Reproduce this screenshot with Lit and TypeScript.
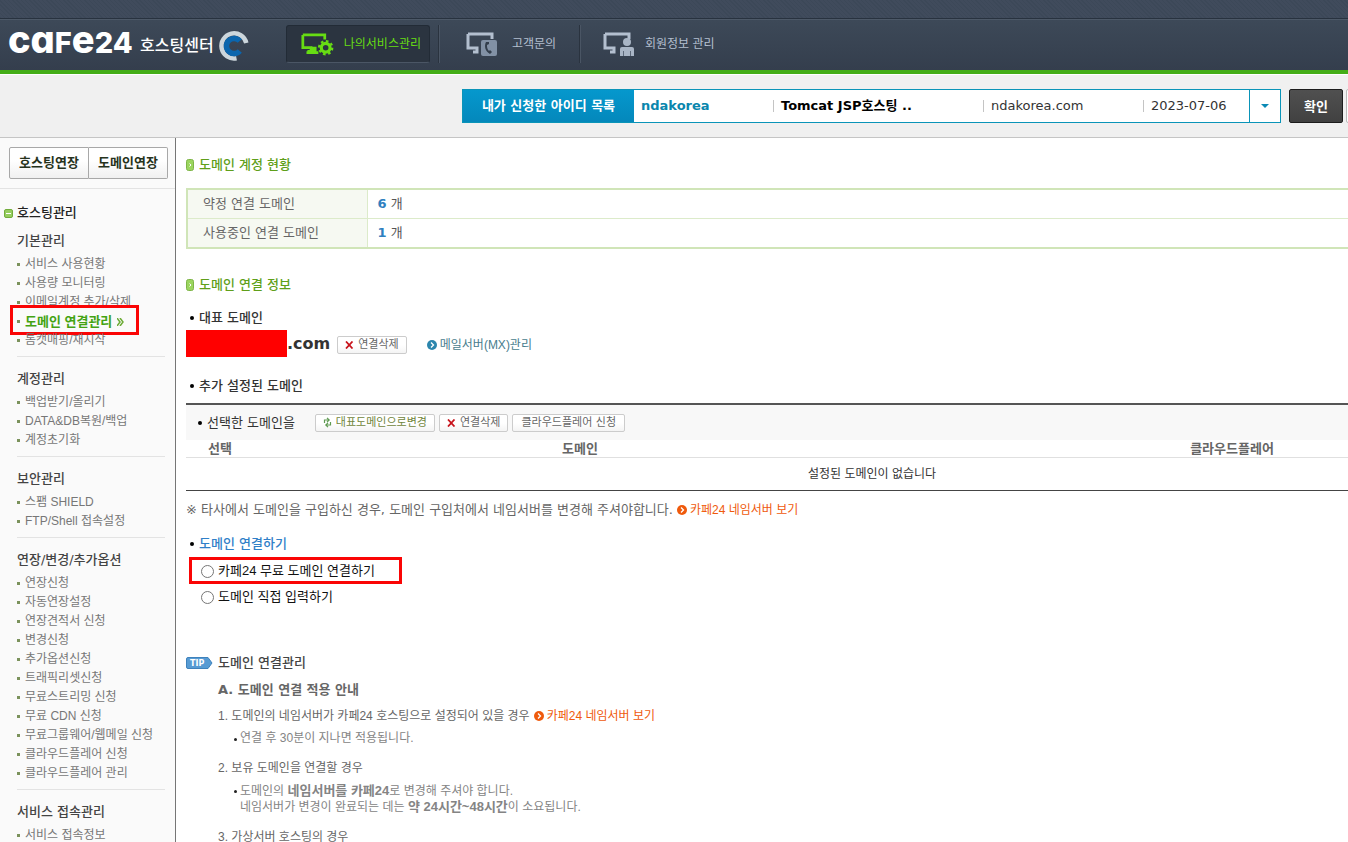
import { LitElement, html, css, svg } from "lit";
import { customElement, property, state } from "lit/decorators.js";

interface MenuGroup {
  title: string;
  items: string[];
}

const MENU: MenuGroup[] = [
  {
    title: "기본관리",
    items: ["서비스 사용현황", "사용량 모니터링", "이메일계정 추가/삭제", "도메인 연결관리", "톰캣매핑/재시작"],
  },
  { title: "계정관리", items: ["백업받기/올리기", "DATA&DB복원/백업", "계정초기화"] },
  { title: "보안관리", items: ["스팸 SHIELD", "FTP/Shell 접속설정"] },
  {
    title: "연장/변경/추가옵션",
    items: [
      "연장신청",
      "자동연장설정",
      "연장견적서 신청",
      "변경신청",
      "추가옵션신청",
      "트래픽리셋신청",
      "무료스트리밍 신청",
      "무료 CDN 신청",
      "무료그룹웨어/웹메일 신청",
      "클라우드플레어 신청",
      "클라우드플레어 관리",
    ],
  },
  { title: "서비스 접속관리", items: ["서비스 접속정보"] },
];

const ACTIVE = "도메인 연결관리";

const screenShape = svg`<path d="M2 2h24v5M2 2v14h9v4H7" fill="none" stroke="currentColor" stroke-width="3"/>`;

@customElement("site-header")
export class SiteHeader extends LitElement {
  static styles = css`
    :host {
      display: block;
      font-family: "Liberation Sans", "Noto Sans CJK KR", sans-serif;
    }
    .strip {
      height: 18px;
      background: repeating-linear-gradient(45deg, #3c4858 0 1px, #404b5c 1px 3px);
      border-bottom: 1px solid #28323f;
    }
    .bar {
      display: flex;
      align-items: center;
      box-sizing: border-box;
      height: 55px;
      padding-bottom: 2px;
      border-top: 1px solid #4d5968;
      border-bottom: 4px solid #44ad17;
      background: linear-gradient(#3d4958, #343e4d);
    }
    .logo {
      display: flex;
      align-items: center;
      width: 278px;
      padding-left: 8px;
      color: #fff;
      text-decoration: none;
    }
    .brand {
      width: 124px;
      font: 800 38px/40px Inter, "Liberation Sans", sans-serif;
      font-feature-settings: "cv11";
      white-space: nowrap;
      margin-bottom: 6px;
    }
    .brand small {
      font-size: 29px;
    }
    .center {
      margin: 4px 0 0 8px;
      font-size: 16px;
      line-height: 24px;
      font-weight: 500;
      white-space: nowrap;
    }
    .swirl {
      width: 32px;
      height: 32px;
      margin: 4px 0 0 4px;
    }
    nav {
      display: flex;
      align-items: center;
    }
    .tab {
      display: flex;
      align-items: center;
      box-sizing: border-box;
      height: 38px;
      padding: 0 8px 0 14px;
      color: #b3bfcf;
      font-size: 12px;
      line-height: 18px;
      text-decoration: none;
      white-space: nowrap;
    }
    .tab svg {
      width: 38px;
      height: 25px;
      margin-right: 8px;
    }
    .tab.on {
      width: 144px;
      border: 1px solid #222b36;
      border-bottom-color: #4b5665;
      border-radius: 3px;
      background: #2b3440;
      color: #67dd13;
    }
    .split {
      width: 1px;
      height: 38px;
      margin: 0 8px;
      background: #2a333f;
      border-right: 1px solid #4a5564;
    }
    .tab.ask {
      width: 123px;
      padding-left: 18px;
    }
    .tab.member svg {
      margin-right: 4px;
    }
  `;

  render() {
    return html`
      <header>
        <div class="strip"></div>
        <div class="bar">
          <a class="logo" href="#" aria-label="cafe24 호스팅센터">
            <span class="brand">ca<small>F</small>e<small>24</small></span>
            <span class="center">호스팅센터</span>
            <svg class="swirl" viewBox="0 0 32 32" fill="none">
              <path d="M28.300 13A12.600 12.600 0 1 0 18.500 28.300" stroke="#ccd6dc" stroke-width="4.500" />
              <path d="M21.800 11A7.600 7.600 0 1 0 21.800 21" stroke="#0b66ae" stroke-width="5.500" />
            </svg>
          </a>
          <nav>
            <a class="tab on" href="#">
              <svg viewBox="0 0 38 25">
                ${screenShape}
                <path d="M11 15h6v5h2v3H6v-3h5z" fill="currentColor" />
                <circle cx="27" cy="16" r="8" fill="#2b3440" />
                <circle cx="27" cy="16" r="4.800" fill="none" stroke="currentColor" stroke-width="3.500" />
                <circle cx="27" cy="16" r="7.200" fill="none" stroke="currentColor" stroke-width="2.500" stroke-dasharray="2.830 2.830" />
              </svg>
              나의서비스관리
            </a>
            <span class="split"></span>
            <a class="tab ask" href="#">
              <svg viewBox="0 0 38 25">
                ${screenShape}
                <rect x="15" y="8" width="16" height="16" rx="2" fill="#8291a5" />
                <path d="M20 10c-2 4-1 9 4 12l2-2-2-2-1 1c-2-2-2-4-2-6l2-1v-2z" fill="#333e4c" />
              </svg>
              고객문의
            </a>
            <span class="split"></span>
            <a class="tab member" href="#">
              <svg viewBox="0 0 38 25">
                ${screenShape}
                <circle cx="24" cy="10" r="4" fill="#a9b5c5" />
                <path d="M17 24v-7q0-2 2-2h10q2 0 2 2v7z" fill="#a9b5c5" />
                <path d="M20.500 19v5M27.500 19v5" stroke="#5d697a" />
              </svg>
              회원정보 관리
            </a>
          </nav>
        </div>
      </header>
    `;
  }
}

@customElement("account-bar")
export class AccountBar extends LitElement {
  @state() private open = false;

  static styles = css`
    :host {
      display: block;
      font-family: "DejaVu Sans", "Noto Sans CJK KR", sans-serif;
      font-size: 13px;
    }
    .bar {
      display: flex;
      align-items: flex-start;
      box-sizing: border-box;
      height: 64px;
      padding: 14px 0 0 462px;
      background: #f0f0f0;
      border-top: 1px solid #fff;
      border-bottom: 1px solid #c5c5c5;
    }
    .picker {
      display: flex;
      box-sizing: border-box;
      width: 819px;
      height: 34px;
      padding: 0;
      border: 1px solid #0a94b8;
      background: #fff;
      color: #333;
      font: inherit;
      text-align: left;
      line-height: 32px;
      white-space: nowrap;
    }
    .label {
      width: 171px;
      background: linear-gradient(#0598cd, #0488bb);
      color: #fff;
      font-weight: 700;
      text-align: center;
    }
    .cell {
      display: flex;
      align-items: center;
      padding-left: 7px;
    }
    .cell + .cell::before {
      content: "";
      width: 1px;
      height: 12px;
      margin-right: 7px;
      background: #c4c4c4;
    }
    .cell + .cell {
      padding-left: 0;
    }
    .id {
      width: 132px;
      color: #0a86ad;
      font-weight: 700;
    }
    .plan {
      width: 210px;
      color: #000;
      font-weight: 700;
    }
    .host {
      width: 160px;
    }
    .date {
      flex: 1;
    }
    .arrow {
      display: grid;
      place-items: center;
      width: 30px;
      border-left: 1px solid #0a94b8;
    }
    .ok {
      box-sizing: border-box;
      width: 54px;
      height: 34px;
      margin-left: 8px;
      padding: 0 0 2px;
      border: 1px solid #1c1c1c;
      border-radius: 2px;
      background: linear-gradient(#505050, #414141);
      color: #fff;
      font: inherit;
      font-weight: 700;
      flex: none;
    }
    .next {
      width: 80px;
      height: 34px;
      margin-left: 3px;
      border: 1px solid #bbb;
      border-radius: 2px;
      box-sizing: border-box;
      background: #fff;
      flex: none;
    }
  `;

  render() {
    return html`
      <div class="bar">
        <button
          class="picker"
          type="button"
          aria-haspopup="listbox"
          aria-expanded=${this.open ? "true" : "false"}
          @click=${() => (this.open = !this.open)}
        >
          <span class="label">내가 신청한 아이디 목록</span>
          <span class="cell id">ndakorea</span>
          <span class="cell plan">Tomcat JSP호스팅 ..</span>
          <span class="cell host">ndakorea.com</span>
          <span class="cell date">2023-07-06</span>
          <span class="arrow">
            <svg width="8" height="4" viewBox="0 0 8 4"><path d="M0 0h8L4 4z" fill="#0a8ab5" /></svg>
          </span>
        </button>
        <button class="ok" type="button">확인</button>
        <span class="next"></span>
      </div>
    `;
  }
}

@customElement("side-menu")
export class SideMenu extends LitElement {
  @property({ attribute: false }) groups: MenuGroup[] = [];

  static styles = css`
    :host {
      display: block;
      box-sizing: border-box;
      background: #fafafa;
      border-right: 1px solid #767676;
      font-family: "Liberation Sans", "Noto Sans CJK KR", sans-serif;
    }
    .extend {
      display: flex;
      padding: 9px 7px 9px 9px;
      border-bottom: 1px solid #e3e3e3;
    }
    .extend button {
      flex: 1;
      box-sizing: border-box;
      height: 32px;
      padding: 0 0 3px;
      border: 1px solid #a8a8a8;
      border-radius: 2px 0 0 2px;
      background: linear-gradient(#fff 40%, #f0f0f0);
      color: #26331c;
      font: inherit;
      font-size: 13px;
      font-weight: 700;
      white-space: nowrap;
    }
    .extend button + button {
      border-left: 0;
      border-radius: 0 2px 2px 0;
    }
    h2 {
      display: flex;
      align-items: center;
      gap: 4px;
      margin: 14px 0 8px 4px;
      color: #222;
      font-size: 13px;
      line-height: 20px;
      font-weight: 500;
    }
    section {
      margin: 0 10px 0 17px;
      padding: 12px 0 6px;
      border-top: 1px solid #e3e3e3;
    }
    section:first-of-type {
      padding-top: 0;
      border-top: 0;
    }
    h3 {
      margin: 0 0 4px;
      color: #444;
      font-family: "DejaVu Sans", "Noto Sans CJK KR", sans-serif;
      font-size: 13px;
      line-height: 20px;
      font-weight: 500;
    }
    ul {
      margin: 0;
      padding: 0;
      list-style: none;
    }
    li {
      position: relative;
      display: flex;
      align-items: center;
      gap: 5px;
      height: 19px;
      font-size: 12px;
      line-height: 19px;
      white-space: nowrap;
    }
    li::before {
      content: "";
      width: 3px;
      height: 3px;
      background: #7b925c;
    }
    a {
      color: #777;
      text-decoration: none;
    }
    .on a {
      color: #44a312;
      font-size: 13px;
      font-weight: 700;
    }
    .mark {
      position: absolute;
      left: -7px;
      top: -7px;
      box-sizing: border-box;
      width: 129px;
      height: 30px;
      border: 3px solid #fa0505;
      pointer-events: none;
    }
  `;

  private renderItem(label: string) {
    if (label !== ACTIVE) return html`<li><a href="#">${label}</a></li>`;
    return html`
      <li class="on">
        <a href="#" aria-current="page">${label}</a>
        <svg width="7" height="8" viewBox="0 0 7 8">
          <path d="M0 0l3 4-3 4M3 0l3 4-3 4" fill="none" stroke="#6cab35" stroke-width="1.500" />
        </svg>
        <span class="mark"></span>
      </li>
    `;
  }

  render() {
    return html`
      <div class="extend">
        <button type="button">호스팅연장</button>
        <button type="button">도메인연장</button>
      </div>
      <h2>
        <svg width="9" height="9" viewBox="0 0 9 9">
          <rect x=".5" y=".5" width="8" height="8" rx="1.500" fill="#96cd5e" stroke="#72ac3c" />
          <path d="M2 4.500h5" stroke="#fff" />
        </svg>
        호스팅관리
      </h2>
      ${this.groups.map(
        (group) => html`
          <section>
            <h3>${group.title}</h3>
            <ul>
              ${group.items.map((item) => this.renderItem(item))}
            </ul>
          </section>
        `
      )}
    `;
  }
}

@customElement("domain-page")
export class DomainPage extends LitElement {
  static styles = css`
    :host {
      display: block;
      padding: 0 0 0 10px;
      background: #fff;
      color: #555;
      font-family: "DejaVu Sans", "Noto Sans CJK KR", sans-serif;
      font-size: 13px;
      line-height: 20px;
    }
    a {
      text-decoration: none;
    }
    h2 {
      display: flex;
      align-items: center;
      gap: 5px;
      margin: 0;
      color: #5f9f1a;
      font-size: 13px;
      line-height: 20px;
      font-weight: 500;
    }
    h3 {
      display: flex;
      align-items: center;
      margin: 0;
      color: #333;
      font-size: 13px;
      line-height: 20px;
      font-weight: 500;
    }
    .dot::before {
      content: "";
      width: 4px;
      height: 4px;
      margin: 0 5px 0 4px;
      border-radius: 50%;
      background: #000;
    }
    .status-title {
      padding: 17px 0 13px;
    }
    table {
      width: 100%;
      border-collapse: collapse;
      table-layout: fixed;
    }
    .status {
      border: 2px solid #d0e5b8;
    }
    .status .key {
      width: 180px;
    }
    .status th {
      padding: 0 0 0 15px;
      background: #f6f9f2;
      border-right: 1px solid #dcebca;
      color: #666;
      font-weight: 400;
      text-align: left;
    }
    .status td {
      padding: 0 0 0 10px;
    }
    .status th,
    .status td {
      height: 28px;
    }
    .status tr + tr > * {
      border-top: 1px solid #dcebca;
    }
    .status b {
      color: #3080bf;
    }
    .info-title {
      padding: 26px 0 13px;
    }
    .domain {
      display: flex;
      align-items: center;
      height: 27px;
      margin: 2px 0 19px;
    }
    .masked {
      width: 101px;
      height: 27px;
      background: #f00;
    }
    .name {
      margin-right: 7px;
      color: #333;
      font-size: 16px;
      font-weight: 700;
    }
    button {
      display: flex;
      align-items: center;
      gap: 4px;
      box-sizing: border-box;
      height: 18px;
      padding: 0 7px;
      border: 1px solid #ccc;
      border-radius: 2px;
      background: linear-gradient(#fff 50%, #f4f4f4);
      color: #666;
      font: 11px/16px "DejaVu Sans", "Noto Sans CJK KR", sans-serif;
      white-space: nowrap;
    }
    .main-set {
      color: #71863c;
    }
    .link {
      display: flex;
      align-items: center;
      gap: 3px;
      font: 12px/20px "Liberation Sans", "Noto Sans CJK KR", sans-serif;
    }
    .domain button,
    .domain .mx {
      margin-top: 2px;
    }
    .mx {
      margin-left: 20px;
      color: #487d8d;
    }
    .tools {
      display: flex;
      align-items: center;
      gap: 4px;
      height: 35px;
      margin-top: 7px;
      padding-left: 8px;
      border-top: 2px solid #555;
      background: #f8f8f8;
    }
    .tools h3 {
      margin-right: 16px;
      font-weight: 400;
    }
    .tools .wide {
      padding: 0 8px;
    }
    .list {
      border-bottom: 1px solid #444;
    }
    .list th {
      height: 17px;
      padding: 0;
      border-bottom: 1px solid #e0e0e0;
      color: #666;
      line-height: 17px;
    }
    .list td {
      height: 32px;
      padding: 0;
      color: #333;
      text-align: center;
      font: 12px/20px "Liberation Sans", "Noto Sans CJK KR", sans-serif;
    }
    .pick {
      width: 68px;
    }
    .note {
      display: flex;
      align-items: center;
      gap: 4px;
      margin: 9px 0 14px;
      color: #666;
    }
    .orange {
      color: #ef5a0c;
    }
    .connect {
      color: #3080c8;
    }
    .choices {
      display: flex;
      flex-direction: column;
      align-items: flex-start;
      gap: 6px;
      margin: 7px 0 46px;
      padding: 0 0 0 15px;
      border: 0;
    }
    .choice {
      position: relative;
      display: flex;
      align-items: center;
      gap: 4px;
      color: #111;
      font-family: "Liberation Sans", "Noto Sans CJK KR", sans-serif;
    }
    .choice input {
      width: 13px;
      height: 13px;
      margin: 0;
    }
    .mark {
      position: absolute;
      left: -12px;
      top: -4px;
      box-sizing: border-box;
      width: 213px;
      height: 27px;
      border: 3px solid #fa0505;
      pointer-events: none;
    }
    .tip {
      display: grid;
      grid-template-columns: 32px 1fr;
      align-items: center;
    }
    .tip-body {
      grid-column: 2;
      color: #666;
      font: 12px/20px "Liberation Sans", "Noto Sans CJK KR", sans-serif;
    }
    .tip h3 {
      color: #444;
    }
    h4 {
      margin: 7px 0 6px;
      font-family: "DejaVu Sans", "Noto Sans CJK KR", sans-serif;
      font-size: 13px;
      line-height: 20px;
    }
    .step {
      display: flex;
      align-items: center;
      gap: 4px;
      margin: 0;
    }
    .tip-body ul {
      margin: 5px 0 12px;
      padding: 0 0 0 22px;
      list-style: none;
      color: #848484;
      line-height: 15px;
    }
    .tip-body li {
      position: relative;
    }
    .tip-body li::before {
      content: "";
      position: absolute;
      left: -6px;
      top: 7px;
      width: 3px;
      height: 3px;
      border-radius: 50%;
      background: #222;
    }
    .tip-body li b {
      font-size: 13px;
    }
  `;

  private pill() {
    return html`<svg width="8" height="12" viewBox="0 0 8 12">
      <rect x=".5" y=".5" width="7" height="11" rx="2" fill="#9bd55f" stroke="#7eb548" />
      <path d="M3.500 4.500L5 6 3.500 7.500" fill="none" stroke="#fff" />
    </svg>`;
  }

  private bullet(color: string) {
    return html`<svg width="10" height="10" viewBox="0 0 10 10">
      <circle cx="5" cy="5" r="5" fill=${color} />
      <path d="M4 2.500L6.500 5 4 7.500" fill="none" stroke="#fff" stroke-width="1.300" />
    </svg>`;
  }

  private cross() {
    return html`<svg width="9" height="8" viewBox="0 0 9 8">
      <path d="M1 .5l6.500 7M7.500 .5L1 7.500" stroke="#c8141c" stroke-width="1.800" />
    </svg>`;
  }

  render() {
    return html`
      <h2 class="status-title">${this.pill()}도메인 계정 현황</h2>
      <table class="status">
        <colgroup><col class="key" /><col /></colgroup>
        <tr><th scope="row">약정 연결 도메인</th><td><b>6</b> 개</td></tr>
        <tr><th scope="row">사용중인 연결 도메인</th><td><b>1</b> 개</td></tr>
      </table>

      <h2 class="info-title">${this.pill()}도메인 연결 정보</h2>
      <h3 class="dot">대표 도메인</h3>
      <div class="domain">
        <span class="masked"></span><span class="name">.com</span>
        <button type="button">${this.cross()}연결삭제</button>
        <a class="link mx" href="#">${this.bullet("#2c86ad")}메일서버(MX)관리</a>
      </div>

      <h3 class="dot">추가 설정된 도메인</h3>
      <div class="tools">
        <h3 class="dot">선택한 도메인을</h3>
        <button class="main-set" type="button">
          <svg width="9" height="11" viewBox="0 0 9 11" fill="none" stroke="#5f9a52" stroke-width="1.200">
            <path d="M1.500 6V3H5.500M4 .8L6.200 3 4 5.200M7.500 5v3H3.500M5 5.800L2.800 8 5 10.200" />
          </svg>
          대표도메인으로변경
        </button>
        <button type="button">${this.cross()}연결삭제</button>
        <button class="wide" type="button">클라우드플레어 신청</button>
      </div>
      <table class="list">
        <thead>
          <tr><th class="pick">선택</th><th>도메인</th><th>클라우드플레어</th></tr>
        </thead>
        <tbody>
          <tr><td colspan="3">설정된 도메인이 없습니다</td></tr>
        </tbody>
      </table>
      <p class="note">
        ※ 타사에서 도메인을 구입하신 경우, 도메인 구입처에서 네임서버를 변경해 주셔야합니다.
        <a class="link orange" href="#">${this.bullet("#ef5a0c")}카페24 네임서버 보기</a>
      </p>

      <h3 class="dot connect">도메인 연결하기</h3>
      <fieldset class="choices" aria-label="도메인 연결하기">
        <label class="choice">
          <input type="radio" name="connect" />카페24 무료 도메인 연결하기<span class="mark"></span>
        </label>
        <label class="choice"><input type="radio" name="connect" />도메인 직접 입력하기</label>
      </fieldset>

      <div class="tip">
        <svg width="27" height="12" viewBox="0 0 27 12" role="img" aria-label="TIP">
          <path d="M2 .5h20l4 5.500-4 5.500H2Q.5 11.500 .5 10V2Q.5 .5 2 .5z" fill="#579bd3" stroke="#3f82bc" />
          <text x="4" y="9" fill="#fff" font-family="DejaVu Sans" font-weight="700" font-size="8">TIP</text>
        </svg>
        <h3>도메인 연결관리</h3>
        <div class="tip-body">
          <h4>A. 도메인 연결 적용 안내</h4>
          <p class="step">
            1. 도메인의 네임서버가 카페24 호스팅으로 설정되어 있을 경우
            <a class="link orange" href="#">${this.bullet("#ef5a0c")}카페24 네임서버 보기</a>
          </p>
          <ul>
            <li>연결 후 30분이 지나면 적용됩니다.</li>
          </ul>
          <p class="step">2. 보유 도메인을 연결할 경우</p>
          <ul>
            <li>
              도메인의 <b>네임서버를 카페24</b>로 변경해 주셔야 합니다.<br />
              네임서버가 변경이 완료되는 데는 <b>약 24시간~48시간</b>이 소요됩니다.
            </li>
          </ul>
          <p class="step">3. 가상서버 호스팅의 경우</p>
        </div>
      </div>
    `;
  }
}

@customElement("app-root")
export class AppRoot extends LitElement {
  static styles = css`
    :host {
      display: block;
      height: 100vh;
      overflow: hidden;
      background: #fff;
    }
    .page {
      display: flex;
      flex-direction: column;
      min-width: 1558px;
      min-height: 100%;
    }
    .body {
      display: grid;
      grid-template-columns: 176px 1fr;
      flex: 1;
    }
  `;

  render() {
    return html`
      <div class="page">
        <site-header></site-header>
        <account-bar></account-bar>
        <div class="body">
          <side-menu .groups=${MENU}></side-menu>
          <domain-page role="main"></domain-page>
        </div>
      </div>
    `;
  }
}
